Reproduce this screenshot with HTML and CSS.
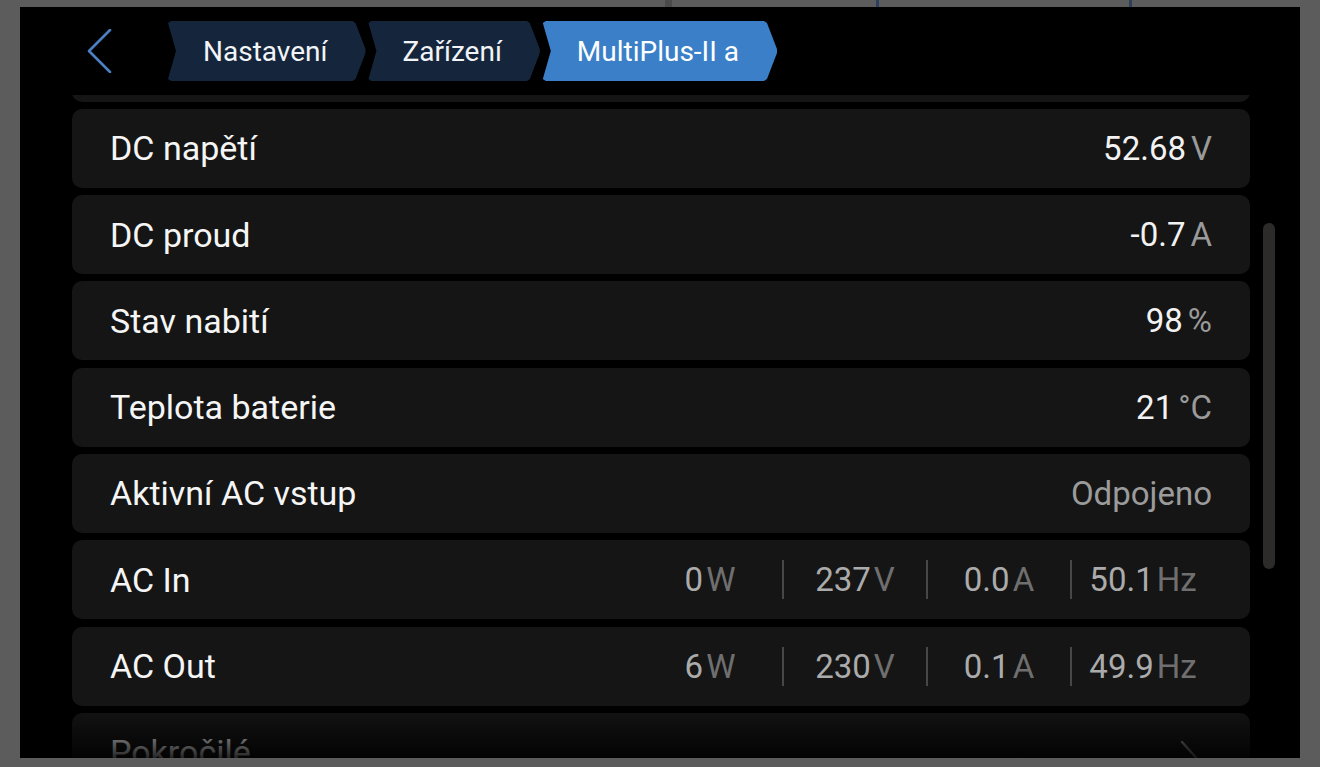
FILE: index.html
```html
<!DOCTYPE html>
<html lang="cs">
<head>
  <meta charset="UTF-8" />
  <meta name="viewport" content="width=device-width, initial-scale=1.0"/>
  <title>MultiPlus-II a</title>
  <link rel="stylesheet" href="styles.css">
</head>
<body>
  <div class="topbar"></div>
  <div class="screen">
    <header class="nav">
      <svg class="back" width="26" height="44" viewBox="0 0 26 44">
        <polyline points="23,1 2,22 23,43" fill="none" stroke="#4a80c2" stroke-width="2.6" stroke-linecap="round" stroke-linejoin="round"/>
      </svg>
      <div class="crumbs">
        <span class="crumb">Nastavení</span>
        <span class="crumb">Zařízení</span>
        <span class="crumb active">MultiPlus-II a</span>
      </div>
    </header>

    <div class="list">
      <div class="list-inner">
        <!-- row scrolled up under the header -->
        <div class="row"></div>

        <div class="row">
          <span class="label">DC napětí</span>
          <span class="value">52.68<span class="unit">V</span></span>
        </div>
        <div class="row">
          <span class="label">DC proud</span>
          <span class="value">-0.7<span class="unit">A</span></span>
        </div>
        <div class="row">
          <span class="label">Stav nabití</span>
          <span class="value">98<span class="unit">%</span></span>
        </div>
        <div class="row">
          <span class="label">Teplota baterie</span>
          <span class="value">21<span class="unit">°C</span></span>
        </div>
        <div class="row">
          <span class="label">Aktivní AC vstup</span>
          <span class="value muted">Odpojeno</span>
        </div>
        <div class="row">
          <span class="label">AC In</span>
          <div class="cells">
            <span class="cell">0<span class="unit">W</span></span>
            <span class="cell">237<span class="unit">V</span></span>
            <span class="cell">0.0<span class="unit">A</span></span>
            <span class="cell">50.1<span class="unit">Hz</span></span>
          </div>
        </div>
        <div class="row">
          <span class="label">AC Out</span>
          <div class="cells">
            <span class="cell">6<span class="unit">W</span></span>
            <span class="cell">230<span class="unit">V</span></span>
            <span class="cell">0.1<span class="unit">A</span></span>
            <span class="cell">49.9<span class="unit">Hz</span></span>
          </div>
        </div>
        <div class="row">
          <span class="label">Pokročilé</span>
          <svg class="chev" width="22" height="44" viewBox="0 0 22 44">
            <polyline points="2,2 20,22 2,42" fill="none" stroke="#8a8a8a" stroke-width="2.4" stroke-linecap="round" stroke-linejoin="round"/>
          </svg>
        </div>
      </div>
    </div>

    <div class="scrollbar"></div>
    <div class="fade"></div>
  </div>
</body>
</html>
```

FILE: styles.css
```css
body {
  margin: 0;
  width: 1320px;
  height: 767px;
  overflow: hidden;
  background: #5c5c5c;
  font-family: Roboto, "Noto Sans", Arial, sans-serif;
  color: #f4f4f4;
}
.topbar {
  height: 7px;
  background: linear-gradient(to right,
    #5c5c5c 665px, #4b4b4b 665px 672px,
    #5c5c5c 672px 876px, #2c3f5b 876px 879px,
    #5c5c5c 879px 1129px, #2c3f5b 1129px 1132px,
    #5c5c5c 1132px);
}
.screen {
  position: relative;
  margin: 0 20px;
  height: 751px;
  background: #000;
  overflow: hidden;
  display: flex;
  flex-direction: column;
}

/* header / breadcrumbs */
.nav {
  display: flex;
  align-items: center;
  height: 60px;
  margin: 14px 0;
  padding-left: 67px;
  flex-shrink: 0;
}
.back {
  margin-right: 54px;
}
.crumbs {
  display: flex;
  gap: 1px;
}
.crumb {
  display: flex;
  align-items: center;
  height: 60px;
  padding: 0 39px 0 36px;
  font-size: 28px;
  color: #f2f4f7;
  background: #15263c;
  clip-path: polygon(4px 0, calc(100% - 14px) 0, calc(100% - 11px) 2px,
    calc(100% - 1px) 28px, calc(100% - 1px) 32px, calc(100% - 11px) 58px,
    calc(100% - 14px) 100%, 4px 100%, 1px calc(100% - 2px), 9px 50%, 1px 2px);
}
.crumb + .crumb {
  padding-left: 35px;
}
.crumb.active {
  background: #3a7fc7;
  color: #fff;
}

/* list */
.list {
  flex: 1;
  overflow: hidden;
  padding: 0 50px 0 52px;
}
.list-inner {
  margin-top: -72.5px;
  display: flex;
  flex-direction: column;
  gap: 7.3px;
}
.row {
  flex-shrink: 0;
  height: 79px;
  display: flex;
  align-items: center;
  justify-content: space-between;
  padding: 0 38px;
  background: #151515;
  border-radius: 10px;
  font-size: 33px;
}
.label {
  color: #f5f5f5;
  font-size: 34px;
}
.value {
  color: #f2f2f2;
}
.value.muted {
  color: #9b9b9b;
}
.unit {
  color: #9a9a9a;
  margin-left: 5px;
}
.cells {
  display: flex;
  align-items: center;
  margin-right: -2px;
}
.cell {
  width: 144px;
  text-align: center;
  color: #ababab;
  line-height: 39px;
}
.cell + .cell {
  border-left: 2px solid #474747;
  width: 142px;
}
.cell .unit {
  color: #6f6f6f;
  margin-left: 3px;
}
.chev {
  margin-right: 10px;
  margin-top: 20px;
}

.scrollbar {
  position: absolute;
  left: 1243px;
  top: 216px;
  width: 12px;
  height: 346px;
  border-radius: 6px;
  background: #2c2b29;
}
.fade {
  position: absolute;
  left: 0;
  right: 0;
  bottom: 0;
  height: 48px;
  background: linear-gradient(to bottom, rgba(0,0,0,0.1), rgba(0,0,0,0.85));
}
```
